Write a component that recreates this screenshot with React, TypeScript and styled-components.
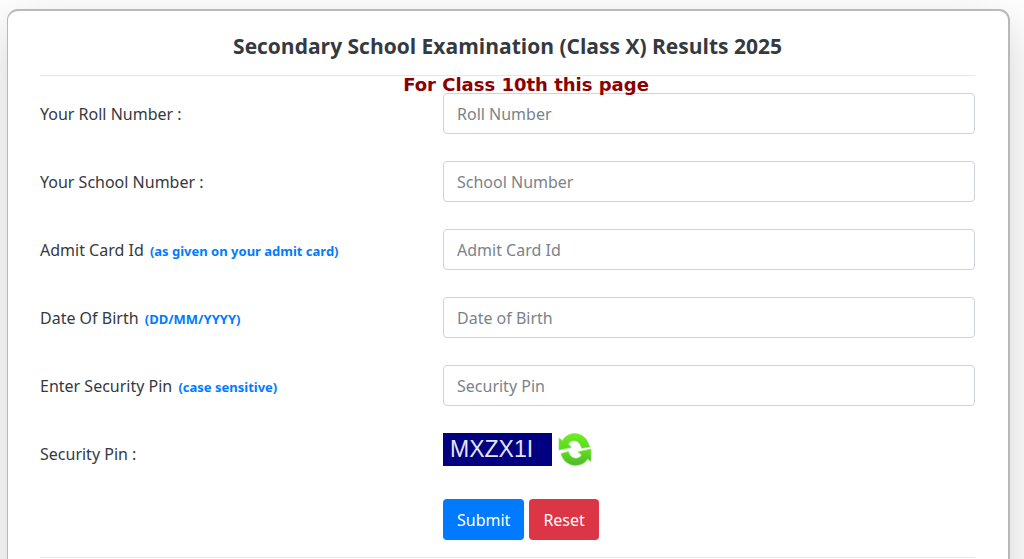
import React from "react";
import styled, { createGlobalStyle } from "styled-components";

const GlobalStyle = createGlobalStyle`
  * { box-sizing: border-box; }
  body {
    margin: 0;
    background: #fff;
    color: #343a40;
    font-family: "Segoe UI", "Noto Sans", sans-serif;
    font-size: 16px;
    line-height: 24px;
  }
`;

const Page = styled.main`
  overflow: hidden;
  height: 100vh;
  padding: 9px 14px 0 7px;
`;

const Card = styled.section`
  position: relative;
  min-height: 640px;
  padding: 19px 33px 32px 32px;
  border: 2px solid #b9b9bc;
  border-left-width: 1px;
  border-radius: 11px;
  background: #fff;
  box-shadow: 0 16px 48px rgba(0, 0, 0, 0.18);
`;

const Title = styled.h1`
  margin: 0;
  font-family: "Segoe UI", "Open Sans", sans-serif;
  font-size: 21px;
  line-height: 32px;
  font-weight: 700;
  text-align: center;
`;

const Divider = styled.hr`
  margin: 13px 0 0;
  border: 0;
  border-top: 1px solid #e6e6e6;
`;

const Note = styled.p`
  position: absolute;
  top: 62px;
  left: 0;
  right: 0;
  padding-left: 36px;
  margin: 0;
  color: #8b0000;
  font-family: Verdana, "DejaVu Sans", sans-serif;
  font-size: 18px;
  font-weight: 700;
  line-height: 24px;
  text-align: center;
  pointer-events: none;
`;

const Form = styled.form`
  display: grid;
  row-gap: 27px;
  padding: 17px 0 4px;
`;

const Row = styled.div`
  display: grid;
  grid-template-columns: 5fr 7fr;
  column-gap: 23px;
`;

const Label = styled.label`
  padding-top: 9px;
`;

const Hint = styled.small`
  margin-left: 2px;
  color: #007bff;
  font-size: 13px;
  font-weight: 700;
`;

const Input = styled.input`
  width: 100%;
  height: 41px;
  padding: 0 13px;
  border: 1px solid #ced4da;
  border-radius: 4px;
  background: #fff;
  color: #495057;
  font: inherit;
  &::placeholder {
    color: #7b838a;
    opacity: 1;
  }
`;

const PinArea = styled.div`
  display: flex;
  align-items: flex-start;
  gap: 6px;
  height: 39px;
`;

const Captcha = styled.output`
  width: 109px;
  height: 33px;
  padding-left: 7px;
  background: #000080;
  color: #e4e4f4;
  font-family: Arial, "Liberation Sans", sans-serif;
  font-size: 23px;
  line-height: 33px;
`;

const Refresh = styled.button`
  display: flex;
  padding: 0;
  border: 0;
  background: none;
`;

const Actions = styled.div`
  display: flex;
  grid-column: 2;
  gap: 5px;
`;

const Button = styled.button<{ $color: string }>`
  height: 41px;
  padding: 0 14px;
  border: 0;
  border-radius: 4px;
  background: ${(p) => p.$color};
  color: #fff;
  font: inherit;
`;

const fields = [
  { id: "roll", label: "Your Roll Number :", placeholder: "Roll Number" },
  { id: "school", label: "Your School Number :", placeholder: "School Number" },
  { id: "admit", label: "Admit Card Id", hint: "(as given on your admit card)", placeholder: "Admit Card Id" },
  { id: "dob", label: "Date Of Birth", hint: "(DD/MM/YYYY)", placeholder: "Date of Birth" },
  { id: "pin", label: "Enter Security Pin", hint: "(case sensitive)", placeholder: "Security Pin" },
];

const RefreshIcon = () => (
  <svg width="34" height="33" viewBox="0 0 34 33" aria-hidden="true">
    <defs>
      <linearGradient id="upper" x1="0" y1="0" x2="0" y2="1">
        <stop offset="0" stopColor="#6af01e" />
        <stop offset="1" stopColor="#5ed424" />
      </linearGradient>
      <linearGradient id="lower" x1="0" y1="0" x2="0" y2="1">
        <stop offset="0" stopColor="#62e21e" />
        <stop offset="1" stopColor="#52b62c" />
      </linearGradient>
    </defs>
    <g strokeWidth="0.6" strokeLinejoin="round">
      <path
        fill="url(#upper)"
        stroke="#8be65a"
        d="M1 5 L4.500 7.500 C7 3 12 0.500 17 0.600 C23 0.800 28 4.500 30 9.500 L32 14 L23.500 15.300 C22.500 10.500 19.500 7.800 16 7.800 C13.500 7.800 11.500 9 10.500 11 L13.500 14.500 L1 17 Z"
      />
      <path
        fill="url(#lower)"
        stroke="#8be65a"
        d="M33 28.500 L29.500 26 C27 30.500 22 32.600 17 32.400 C11 32.200 6 28.500 4 23.500 L3 20.500 L10.500 18.500 C11.500 22.800 14.500 25.200 18 25.200 C20.500 25.200 22.500 24 23.500 22 L20 18.800 L33 16 Z"
      />
    </g>
  </svg>
);

export default function App() {
  return (
    <>
      <GlobalStyle />
      <Page>
        <Card>
          <Title>Secondary School Examination (Class X) Results 2025</Title>
          <Divider />
          <Form onSubmit={(e) => e.preventDefault()}>
            {fields.map((f) => (
              <Row key={f.id}>
                <Label htmlFor={f.id}>
                  {f.label} {f.hint && <Hint>{f.hint}</Hint>}
                </Label>
                <Input id={f.id} type="text" placeholder={f.placeholder} />
              </Row>
            ))}
            <Row>
              <Label htmlFor="captcha">Security Pin :</Label>
              <PinArea>
                <Captcha id="captcha">MXZX1I</Captcha>
                <Refresh type="button" aria-label="Refresh security pin">
                  <RefreshIcon />
                </Refresh>
              </PinArea>
            </Row>
            <Row>
              <Actions>
                <Button type="submit" $color="#007bff">Submit</Button>
                <Button type="reset" $color="#dc3545">Reset</Button>
              </Actions>
            </Row>
          </Form>
          <Divider />
          <Note>For Class 10th this page</Note>
        </Card>
      </Page>
    </>
  );
}
